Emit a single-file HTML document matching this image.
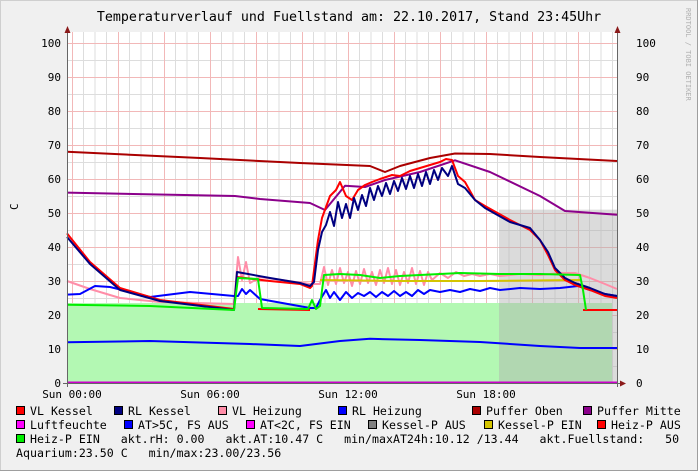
<!DOCTYPE html>
<html><head><meta charset="utf-8"><style>
html,body{margin:0;padding:0;}
body{width:698px;height:471px;overflow:hidden;background:#f0f0f0;}
svg{display:block;}
text{font-family:"DejaVu Sans Mono","Liberation Mono",monospace;white-space:pre;}
</style></head><body>
<svg width="698" height="471" viewBox="0 0 698 471" xmlns="http://www.w3.org/2000/svg">
<defs>
<pattern id="g" patternUnits="userSpaceOnUse" x="72" y="43" width="46" height="34">
<rect width="46" height="34" fill="#fff"/>
<g stroke="#ddd" stroke-width="1">
<line x1="11.5" y1="0" x2="11.5" y2="34"/><line x1="23" y1="0" x2="23" y2="34"/><line x1="34.5" y1="0" x2="34.5" y2="34"/>
<line x1="0" y1="17.5" x2="46" y2="17.5"/>
</g>
<g stroke="#f2b8b8" stroke-width="1">
<line x1="0.5" y1="0" x2="0.5" y2="34"/><line x1="0" y1="0.5" x2="46" y2="0.5"/>
</g>
</pattern>
</defs>
<rect x="0.5" y="0.5" width="697" height="470" fill="#f0f0f0" stroke="#cfcfcf"/>
<rect x="697" y="0" width="1" height="471" fill="#9e9e9e"/>
<rect x="0" y="470" width="698" height="1" fill="#9e9e9e"/>
<text x="349" y="21" font-size="13.3" text-anchor="middle" fill="#000">Temperaturverlauf und Fuellstand am: 22.10.2017, Stand 23:45Uhr</text>
<text transform="translate(686,8) rotate(90)" font-size="7" fill="#b0b0b0">RRDTOOL / TOBI OETIKER</text>
<text transform="translate(18,210) rotate(-90)" font-size="11" fill="#000">C</text>
<rect x="67" y="32" width="550" height="351" fill="url(#g)"/>
<rect x="67" y="303" width="545" height="80" fill="#b3f8b3"/>
<polygon points="499,383 499,209.6 617,209.6 617,383" fill="#b0b0b0" fill-opacity="0.45"/>
<g fill="none" stroke-width="2" stroke-linejoin="round">
<polyline stroke="#aa0000" points="67,151.8 200,158 300,163 370,166 385,172 400,166 430,158 455,153.5 490,154 540,157 617,161"/>
<polyline stroke="#8b008b" points="67,192.6 235,196 260,199 310,203 325,210 345,185.8 365,187 385,180 420,172 455,160.3 490,172 540,196 565,211 617,214.7"/>
<polyline stroke="#0000ff" points="67,342.2 150,341 250,344 300,346 340,341 370,338.8 420,340 480,342 540,346 580,348 617,348"/>
<polyline stroke="#ff8da8" points="67,281 90,289 120,298 160,302 234,304 238,257 242,280 246,262 250,283 260,277 310,284 320,284 324,267 328,285 332,270 336,284 340,268 344,283 348,272 352,286 356,271 360,284 364,269 368,283 372,272 376,285 380,270 384,283 388,268 392,284 396,270 400,285 404,272 408,283 412,268 416,284 420,271 424,285 428,272 432,280 440,273 448,278 456,272 464,276 472,274 480,276 490,274 500,276 520,274 540,275 560,273 575,273 590,278 605,284 617,289"/>
<polyline stroke="#d4c400" points="320,280 400,281 480,281 580,280"/>
<polyline stroke="#0000ff" points="67,294.6 80,294 95,286 110,287 150,297 190,292 234,296 238,296 242,289 246,294 250,290 260,299 310,308 316,308 320,300 326,290 330,298 334,292 340,300 346,292 352,298 358,293 364,296 370,292 376,297 382,292 388,296 394,291 400,296 406,292 412,296 418,290 424,294 430,290 440,292 450,290 460,292 470,289 480,291 490,288 500,290 520,288 540,289 560,288 578,286 590,290 605,294 617,296"/>
<polyline stroke="#ff0000" points="67,233.4 90,262 120,288 160,300 234,309 237,277 270,281 300,284 310,288 312,286 318,240 322,218 330,196 336,190 340,182 346,196 352,200 358,190 365,185 372,182 380,179 392,175 400,176 410,171 420,168 430,165 440,162 446,159 452,160 458,176 465,182 475,200 485,206 510,220 530,230 540,240 548,255 555,270 565,280 575,285 590,290 605,296 617,298"/>
<polyline stroke="#ff0000" points="258,309 310,310"/>
<polyline stroke="#ff0000" points="583,310 617,310"/>
<polyline stroke="#000080" points="67,237 90,264 120,290 160,301 234,310 237,272 270,278 300,283 310,286 314,282 318,250 322,232 326,225 330,212 334,226 338,202 342,218 346,204 350,218 354,198 358,210 362,195 366,206 370,188 374,200 378,186 382,196 386,183 390,194 394,181 398,191 402,178 406,189 410,176 414,188 418,174 422,186 426,172 430,184 434,170 438,180 442,168 448,176 452,166 458,184 465,188 475,200 485,208 510,222 530,228 540,240 548,252 555,268 565,278 575,283 590,288 605,294 617,296"/>
<polyline stroke="#00ee00" points="67,304.8 150,306 234,310 238,278 258,279 262,308 308,309 312,300 316,309 320,306 324,275 340,274 360,275 380,278 400,276 420,275 460,273 500,274 540,274 580,275 583,290 586,310"/>
<line x1="67" y1="382.5" x2="617" y2="382.5" stroke="#cc00cc"/>
</g>
<line x1="67.5" y1="28" x2="67.5" y2="387" stroke="#666"/>
<line x1="617.5" y1="28" x2="617.5" y2="387" stroke="#666"/>
<line x1="63" y1="383.5" x2="622" y2="383.5" stroke="#666"/>
<polygon points="64.5,33 70.5,33 67.5,26" fill="#8b1a1a"/>
<polygon points="614.5,33 620.5,33 617.5,26" fill="#8b1a1a"/>
<polygon points="620,380.5 620,386.5 626,383.5" fill="#8b1a1a"/>
<g font-size="11" fill="#000" text-anchor="end">
<text x="61" y="47">100</text><text x="61" y="81">90</text><text x="61" y="115">80</text><text x="61" y="149">70</text><text x="61" y="183">60</text><text x="61" y="217">50</text><text x="61" y="251">40</text><text x="61" y="285">30</text><text x="61" y="319">20</text><text x="61" y="353">10</text><text x="61" y="387">0</text>
</g>
<g font-size="11" fill="#000">
<text x="636" y="47">100</text><text x="636" y="81">90</text><text x="636" y="115">80</text><text x="636" y="149">70</text><text x="636" y="183">60</text><text x="636" y="217">50</text><text x="636" y="251">40</text><text x="636" y="285">30</text><text x="636" y="319">20</text><text x="636" y="353">10</text><text x="636" y="387">0</text>
</g>
<g font-size="11" fill="#000" text-anchor="middle">
<text x="72" y="398">Sun 00:00</text><text x="210" y="398">Sun 06:00</text><text x="348" y="398">Sun 12:00</text><text x="486" y="398">Sun 18:00</text>
</g>
<g stroke="#000" stroke-width="1">
<rect x="16.5" y="406.5" width="8" height="8" fill="#ff0000"/>
<rect x="114.5" y="406.5" width="8" height="8" fill="#000080"/>
<rect x="218.5" y="406.5" width="8" height="8" fill="#ff8da8"/>
<rect x="338.5" y="406.5" width="8" height="8" fill="#0000ff"/>
<rect x="472.5" y="406.5" width="8" height="8" fill="#aa0000"/>
<rect x="583.5" y="406.5" width="8" height="8" fill="#8b008b"/>
<rect x="16.5" y="420.5" width="8" height="8" fill="#ff00ff"/>
<rect x="124.5" y="420.5" width="8" height="8" fill="#0000ff"/>
<rect x="246.5" y="420.5" width="8" height="8" fill="#ff00ff"/>
<rect x="368.5" y="420.5" width="8" height="8" fill="#808080"/>
<rect x="484.5" y="420.5" width="8" height="8" fill="#d4c400"/>
<rect x="597.5" y="420.5" width="8" height="8" fill="#ff0000"/>
<rect x="16.5" y="434.5" width="8" height="8" fill="#00ee00"/>
</g>
<g font-size="11.6" fill="#000">
<text x="30" y="415">VL Kessel</text>
<text x="128" y="415">RL Kessel</text>
<text x="232" y="415">VL Heizung</text>
<text x="352" y="415">RL Heizung</text>
<text x="486" y="415">Puffer Oben</text>
<text x="597" y="415">Puffer Mitte</text>
<text x="30" y="429">Luftfeuchte</text>
<text x="138" y="429">AT&gt;5C, FS AUS</text>
<text x="260" y="429">AT&lt;2C, FS EIN</text>
<text x="382" y="429">Kessel-P AUS</text>
<text x="498" y="429">Kessel-P EIN</text>
<text x="611" y="429">Heiz-P AUS</text>
<text x="30" y="443">Heiz-P EIN   akt.rH: 0.00   akt.AT:10.47 C   min/maxAT24h:10.12 /13.44   akt.Fuellstand:   50</text>
<text x="16" y="457">Aquarium:23.50 C   min/max:23.00/23.56</text>
</g>
</svg>
</body></html>
